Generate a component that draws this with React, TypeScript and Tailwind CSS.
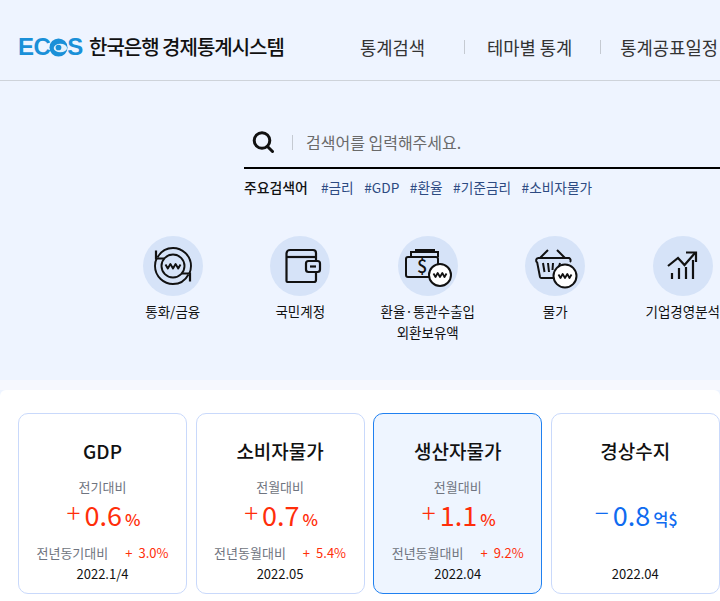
const FONT = { fontFamily: '"Noto Sans CJK KR", "Noto Sans", sans-serif' };

const Won = ({ cx, cy, r }: { cx: number; cy: number; r: number }) => (
  <g>
    <circle cx={cx} cy={cy} r={r} fill="#fff" stroke="#111" strokeWidth="2" />
    <path
      d={`M${cx - 6.5} ${cy - 1.5}l2 3.5 2.2-4 2.3 4 2.3-4 2.2 4 2-3.5`}
      fill="none"
      stroke="#111"
      strokeWidth="1.8"
      strokeLinejoin="round"
    />
  </g>
);

const IconCurrency = () => (
  <svg width="60" height="60" viewBox="0 0 60 60" fill="none" stroke="#111" strokeWidth="1.9">
    <circle cx="30" cy="30" r="11.5" />
    <path d="M22.5 28.5l2.3 4 2.6-4.5 2.6 4.5 2.6-4.5 2.6 4.5 2.3-4" strokeLinejoin="round" />
    <path d="M14.5 21.5C18 15 24 12 30 12c9 0 18 7.5 18 18 0 3-.6 5.5-1.8 8" />
    <path d="M45.5 38.5C42 45 36 48 30 48c-9 0-18-7.5-18-18 0-3 .6-5.5 1.8-8" />
    <path d="M13 14.5v8h8" strokeWidth="2.2" />
    <path d="M47 45.5v-8h-8" strokeWidth="2.2" />
  </svg>
);

const IconWallet = () => (
  <svg width="60" height="60" viewBox="0 0 60 60" fill="none" stroke="#111" strokeWidth="2.2">
    <path d="M46 24v-7a3 3 0 0 0-3-3H20a3.500 3.500 0 0 0-3.500 3.500V45a1 1 0 0 0 1 1H44a2 2 0 0 0 2-2v-7" />
    <path d="M17 21h29" />
    <rect x="36" y="25" width="14" height="11" rx="2.500" />
    <path d="M40 30.500h6" />
  </svg>
);

const IconMoney = () => (
  <svg width="60" height="60" viewBox="0 0 60 60" fill="none" stroke="#111" strokeWidth="2">
    <path d="M32 41H10a2 2 0 0 1-2-2V23a2 2 0 0 1 2-2h28a2 2 0 0 1 2 2v5" />
    <path d="M13 21v-5h27v5" />
    <path d="M18 16v-2h18v2" />
    <text x="19" y="37" fontSize="18" fontWeight="500" fill="#111" stroke="none" style={FONT}>$</text>
    <Won cx={42} cy={39} r={11} />
  </svg>
);

const IconBasket = () => (
  <svg width="60" height="60" viewBox="0 0 60 60" fill="none" stroke="#111" strokeWidth="2">
    <path d="M15 22l8-8M40 22l-8-8" />
    <path d="M13 22h31a2.500 2.500 0 0 1 1 4" />
    <path d="M13 22a2.500 2.500 0 0 0-.8 4.500L15 41a1.500 1.500 0 0 0 1.500 1H31" />
    <path d="M18 27l1.500 9M23 27l1 9M28 27l-.5 7M35 27l-1 4" />
    <Won cx={40} cy={40} r={11.500} />
  </svg>
);

const IconChart = () => (
  <svg width="60" height="60" viewBox="0 0 60 60" fill="none" stroke="#111" strokeWidth="2.2">
    <path d="M15 30l10-8 6.500 7L42 17" />
    <path d="M33 16.500h10V26" />
    <path d="M19 37v6M26 32v11M33 31v12M40 24v19" />
  </svg>
);

const categories = [
  { icon: <IconCurrency />, lines: ["통화/금융"] },
  { icon: <IconWallet />, lines: ["국민계정"] },
  { icon: <IconMoney />, lines: ["환율·통관수출입", "외환보유액"] },
  { icon: <IconBasket />, lines: ["물가"] },
  { icon: <IconChart />, lines: ["기업경영분석"] },
];

const cards = [
  { title: "GDP", sub: "전기대비", sign: "+", value: "0.6", unit: "%", yoyLabel: "전년동기대비", yoy: "3.0%", date: "2022.1/4" },
  { title: "소비자물가", sub: "전월대비", sign: "+", value: "0.7", unit: "%", yoyLabel: "전년동월대비", yoy: "5.4%", date: "2022.05" },
  { title: "생산자물가", sub: "전월대비", sign: "+", value: "1.1", unit: "%", yoyLabel: "전년동월대비", yoy: "9.2%", date: "2022.04", active: true },
  { title: "경상수지", sub: "", sign: "−", value: "0.8", unit: "억$", yoyLabel: "", yoy: "", date: "2022.04", blue: true },
];

function Card({ c }: { c: (typeof cards)[number] }) {
  const color = c.blue ? "text-[#0f6bf0]" : "text-[#ff2e0a]";
  return (
    <div
      className={`flex h-[181px] w-[169px] shrink-0 flex-col items-center rounded-[10px] border pt-[22px] ${
        c.active ? "border-[#1f80f0] bg-[#eef5ff]" : "border-[#c9d9fb] bg-white"
      }`}
    >
      <div className="h-[30px] text-[19px] leading-[30px] font-medium text-[#111]">{c.title}</div>
      <div className="mt-[11px] h-[20px] text-[13px] leading-[20px] text-[#6f7480]">{c.sub}</div>
      <div className={`flex h-[36px] items-baseline pl-[2px] leading-[36px] ${color}`}>
        <span className="mr-[4px] -translate-y-[3px] text-[26px] leading-[36px] font-light">{c.sign}</span>
        <span className="text-[27px] leading-[36px]">{c.value}</span>
        <span className="ml-[3px] text-[16.5px] leading-[36px] font-medium">{c.unit}</span>
      </div>
      <div className="mt-[10px] flex h-[20px] items-center text-[13px] leading-[20px]">
        <span className="text-[#6f7480]">{c.yoyLabel}</span>
        {c.yoy && (
          <span className={`ml-[17px] ${color}`}>
            <span className="mr-[6px]">+</span>
            {c.yoy}
          </span>
        )}
      </div>
      <div className="mt-[1px] text-[13px] leading-[20px] text-[#111]">{c.date}</div>
    </div>
  );
}

export default function App() {
  return (
    <div className="h-[601px] w-[720px] overflow-hidden bg-[#eef4ff]" style={FONT}>
      <header className="flex h-[81px] items-center border-b border-[#ced3da] pt-[14px] pl-[18px] whitespace-nowrap">
        <div className="flex w-[71px] items-center text-[24px] leading-none font-bold tracking-[-0.5px] text-[#1a90d8]" style={{ fontFamily: '"Liberation Sans", sans-serif' }}>
          E
          <span>C</span>
          <svg width="19" height="19" viewBox="0 0 20 20" className="-mx-[1px]">
            <circle cx="10" cy="10" r="9.500" fill="#1a90d8" />
            <ellipse cx="12" cy="10.500" rx="7" ry="4.500" fill="#e4f2fc" />
            <circle cx="10" cy="10" r="3" fill="#1a90d8" />
          </svg>
          S
        </div>
        <div className="text-[20px] leading-none font-medium tracking-[-1px] text-[#111]">한국은행 경제통계시스템</div>
        <nav className="ml-[76px] flex items-center text-[17.7px] text-[#333]">
          <span>통계검색</span>
          <span className="mr-[22px] ml-[39px] h-[14px] w-px bg-[#c5cad2]" />
          <span>테마별 통계</span>
          <span className="mr-[19px] ml-[28px] h-[14px] w-px bg-[#c5cad2]" />
          <span>통계공표일정</span>
        </nav>
      </header>

      <section className="h-[299px]">
        <div className="ml-[244px] h-[88px] border-b-2 border-black">
          <div className="flex h-[84px] items-center pt-[38px] pl-[8px]">
            <svg width="22" height="24" viewBox="0 0 22 24" fill="none" stroke="#111" strokeWidth="3">
              <circle cx="10" cy="10.500" r="7.800" />
              <path d="M15.500 16.500l5 5" strokeLinecap="round" />
            </svg>
            <span className="mr-[13px] ml-[18px] h-[15px] w-px bg-[#c5cad2]" />
            <span className="text-[16px] leading-none text-[#6a6a6a]">검색어를 입력해주세요.</span>
          </div>
        </div>
        <div className="mt-[8px] ml-[244px] flex items-baseline leading-[20px] whitespace-nowrap">
          <span className="mr-[13px] text-[13.9px] font-medium text-[#111]">주요검색어</span>
          <span className="flex gap-[10.5px] text-[13.7px] text-[#2d4a82]">
            <span>#금리</span>
            <span>#GDP</span>
            <span>#환율</span>
            <span>#기준금리</span>
            <span>#소비자물가</span>
          </span>
        </div>
        <div className="mt-[39px] flex pl-[109px]">
          {categories.map((c) => (
            <div key={c.lines[0]} className="flex w-[127.5px] shrink-0 flex-col items-center">
              <div className="h-[60px] w-[60px] rounded-full bg-[#d6e3f8]">{c.icon}</div>
              <div className="mt-[5px] text-center text-[13.5px] leading-[21px] whitespace-nowrap text-[#111]">
                {c.lines.map((l) => (
                  <div key={l}>{l}</div>
                ))}
              </div>
            </div>
          ))}
        </div>
      </section>

      <div className="h-[10px] bg-[#f6f8fe]" />
      <section className="h-[211px] rounded-t-[6px] bg-white">
        <div className="flex gap-[8.6px] pt-[23px] pl-[18px]">
          {cards.map((c) => (
            <Card key={c.title} c={c} />
          ))}
        </div>
      </section>
    </div>
  );
}
